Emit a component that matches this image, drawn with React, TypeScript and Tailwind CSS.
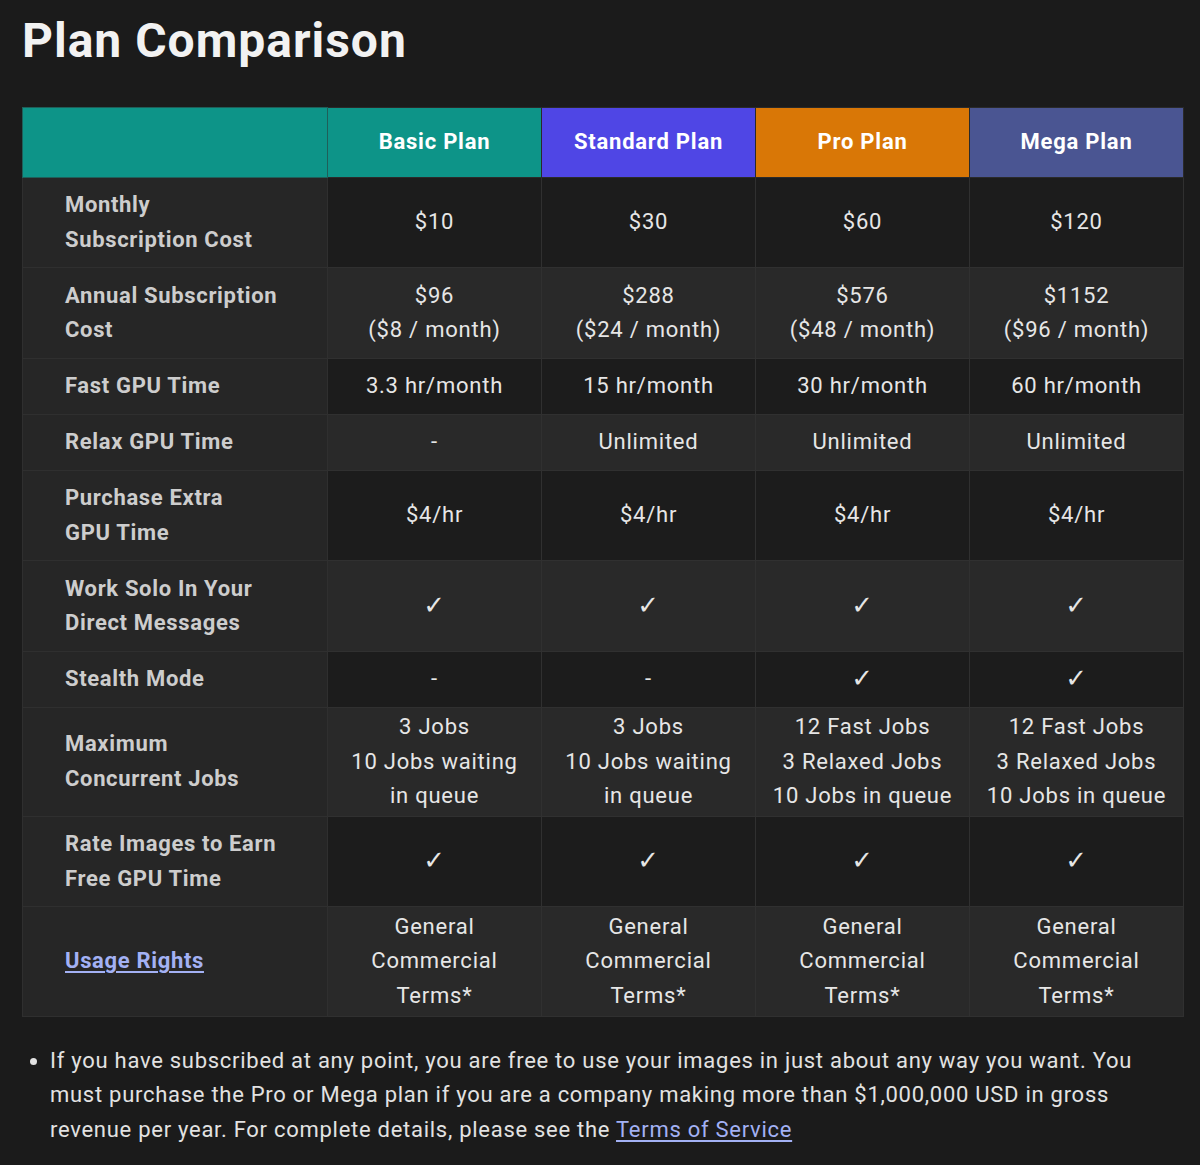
import React from "react";

type Row = { label: React.ReactNode; cells: React.ReactNode[]; light: boolean };

const br = (a: string, b: string, c?: string) => (
  <>
    {a}
    <br />
    {b}
    {c !== undefined && (
      <>
        <br />
        {c}
      </>
    )}
  </>
);

const check = (
  <span className="text-[26px] font-bold" style={{ fontFamily: "'DejaVu Sans', sans-serif" }}>
    ✓
  </span>
);

const rows: Row[] = [
  { label: br("Monthly", "Subscription Cost"), cells: ["$10", "$30", "$60", "$120"], light: false },
  {
    label: br("Annual Subscription", "Cost"),
    cells: [br("$96", "($8 / month)"), br("$288", "($24 / month)"), br("$576", "($48 / month)"), br("$1152", "($96 / month)")],
    light: true,
  },
  { label: "Fast GPU Time", cells: ["3.3 hr/month", "15 hr/month", "30 hr/month", "60 hr/month"], light: false },
  { label: "Relax GPU Time", cells: ["-", "Unlimited", "Unlimited", "Unlimited"], light: true },
  { label: br("Purchase Extra", "GPU Time"), cells: ["$4/hr", "$4/hr", "$4/hr", "$4/hr"], light: false },
  { label: br("Work Solo In Your", "Direct Messages"), cells: [check, check, check, check], light: true },
  { label: "Stealth Mode", cells: ["-", "-", check, check], light: false },
  {
    label: br("Maximum", "Concurrent Jobs"),
    cells: [
      br("3 Jobs", "10 Jobs waiting", "in queue"),
      br("3 Jobs", "10 Jobs waiting", "in queue"),
      br("12 Fast Jobs", "3 Relaxed Jobs", "10 Jobs in queue"),
      br("12 Fast Jobs", "3 Relaxed Jobs", "10 Jobs in queue"),
    ],
    light: true,
  },
  { label: br("Rate Images to Earn", "Free GPU Time"), cells: [check, check, check, check], light: false },
  {
    label: (
      <a href="#" className="text-[#a3b1f4] underline underline-offset-[3px] decoration-[1.5px]">
        Usage Rights
      </a>
    ),
    cells: [
      br("General", "Commercial", "Terms*"),
      br("General", "Commercial", "Terms*"),
      br("General", "Commercial", "Terms*"),
      br("General", "Commercial", "Terms*"),
    ],
    light: true,
  },
];

const headers = [
  { name: "Basic Plan", bg: "bg-[#0d9488]" },
  { name: "Standard Plan", bg: "bg-[#4f46e5]" },
  { name: "Pro Plan", bg: "bg-[#d97706]" },
  { name: "Mega Plan", bg: "bg-[#4a5592]" },
];

export default function App() {
  return (
    <div
      className="min-h-[1165px] bg-[#1b1b1b] px-[22px] pt-[8px] pb-8"
      style={{ fontFamily: "Roboto, 'Liberation Sans', sans-serif" }}
    >
      <h1 className="text-[48px] leading-[66px] font-bold text-[#f2f2f2] tracking-[1px]">Plan Comparison</h1>
      <table className="mt-[33px] w-[1161px] table-fixed border-collapse text-[22px] leading-[34.5px] tracking-[0.035em]">
        <colgroup>
          <col className="w-[305px]" />
          <col className="w-[214px]" />
          <col className="w-[214px]" />
          <col className="w-[214px]" />
          <col className="w-[214px]" />
        </colgroup>
        <thead>
          <tr className="h-[70px]">
            <th className="bg-[#0d9488] border border-[#1f5f59]" />
            {headers.map((h) => (
              <th
                key={h.name}
                className={`${h.bg} border border-[#2a2a2a] text-center font-bold text-white align-middle`}
              >
                {h.name}
              </th>
            ))}
          </tr>
        </thead>
        <tbody>
          {rows.map((r, i) => (
            <tr key={i}>
              <td
                className={`bg-[#262626] border border-[#2f2f2f] pl-[42px] pr-2 ${r.light ? "py-[10.5px]" : "py-[10px]"} font-bold text-[#cdcdcd] tracking-[0.03em] align-middle`}
              >
                {r.label}
              </td>
              {r.cells.map((c, j) => (
                <td
                  key={j}
                  className={`${r.light ? "bg-[#292929]" : "bg-[#1c1c1c]"} border border-[#303030] py-[2.5px] text-center text-[#e6e6e6] align-middle`}
                >
                  {c}
                </td>
              ))}
            </tr>
          ))}
        </tbody>
      </table>
      <ul className="mt-[27px] list-disc pl-[28px] text-[22px] leading-[34.5px] tracking-[0.033em] text-[#e2e2e2]">
        <li>
          If you have subscribed at any point, you are free to use your images in just about any way you want. You
          must purchase the Pro or Mega plan if you are a company making more than $1,000,000 USD in gross revenue per
          year. For complete details, please see the{" "}
          <a href="#" className="text-[#a3b1f4] underline underline-offset-[3px]">
            Terms of Service
          </a>
        </li>
      </ul>
    </div>
  );
}
